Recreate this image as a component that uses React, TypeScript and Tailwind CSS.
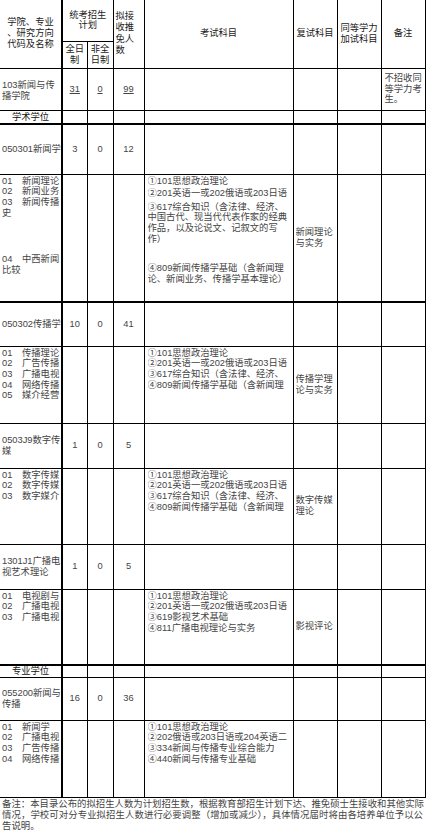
import React from "react";

type P = { children?: React.ReactNode; className?: string };

const bd = "border border-black p-0";

function Line({ children, className = "" }: P) {
  return <div className={`whitespace-nowrap overflow-hidden ${className}`}>{children}</div>;
}

function Item({ code, name, className = "" }: { code: string; name: string; className?: string }) {
  return (
    <div className={`flex whitespace-nowrap ${className}`}>
      <span className="w-[20px] shrink-0">{code}</span>
      <span>{name}</span>
    </div>
  );
}

function Subjects({ lines }: { lines: string[] }) {
  return (
    <div className="w-[143px] overflow-hidden">
      {lines.map((l, i) => (
        <Line key={i}>{l}</Line>
      ))}
    </div>
  );
}

const common4 = [
  "①101思想政治理论",
  "②201英语一或202俄语或203日语",
  "③617综合知识（含法律、经济、",
  "④809新闻传播学基础（含新闻理",
];

function CodeRow({ l1, l2, a, b, c, thick = false, h }: { l1: string; l2?: string; a: string; b: string; c: string; thick?: boolean; h: string }) {
  const bb = thick ? "border-b-2" : "";
  return (
    <tr className={h}>
      <td className={`${bd} ${bb} border-l-0 border-r-2 pl-[2px] align-middle`}>
        <Line>{l1}</Line>
        {l2 && <Line>{l2}</Line>}
      </td>
      <td className={`${bd} ${bb} text-center align-middle`}>{a}</td>
      <td className={`${bd} ${bb} text-center align-middle`}>{b}</td>
      <td className={`${bd} ${bb} text-center align-middle`}>{c}</td>
      <td className={`${bd} ${bb}`}></td>
      <td className={`${bd} ${bb}`}></td>
      <td className={`${bd} ${bb}`}></td>
      <td className={`${bd} ${bb}`}></td>
    </tr>
  );
}

function DetailRow({ h, left, mid, retest, thick = false }: { h: string; left: React.ReactNode; mid: React.ReactNode; retest?: React.ReactNode; thick?: boolean }) {
  const bb = thick ? "border-b-2" : "";
  return (
    <tr className={h}>
      <td className={`${bd} ${bb} border-l-0 border-r-2 pl-[2px] pt-[1px] align-top`}>{left}</td>
      <td className={`${bd} ${bb}`}></td>
      <td className={`${bd} ${bb}`}></td>
      <td className={`${bd} ${bb}`}></td>
      <td className={`${bd} ${bb} pl-[3px] pt-[1px] align-top`}>{mid}</td>
      <td className={`${bd} ${bb} pl-[2px] align-middle`}>{retest}</td>
      <td className={`${bd} ${bb}`}></td>
      <td className={`${bd} ${bb}`}></td>
    </tr>
  );
}

function DegreeRow({ label, thick = false }: { label: string; thick?: boolean }) {
  const bb = thick ? "border-b-2" : "";
  return (
    <tr className={label === "学术学位" ? "h-[14px]" : "h-[12px]"}>
      <td className={`${bd} ${bb} border-l-0 border-r-2 text-center align-middle text-[#111]`}>
        <div className="leading-[10px]">{label}</div>
      </td>
      <td className={`${bd} ${bb}`}></td>
      <td className={`${bd} ${bb}`}></td>
      <td className={`${bd} ${bb}`}></td>
      <td className={`${bd} ${bb}`}></td>
      <td className={`${bd} ${bb}`}></td>
      <td className={`${bd} ${bb}`}></td>
      <td className={`${bd} ${bb}`}></td>
    </tr>
  );
}

export default function App() {
  return (
    <div className="w-[427px] min-h-[831px] bg-white font-['Liberation_Sans','Noto_Sans_CJK_SC',sans-serif] text-[#444]">
      <table className="table-fixed border-collapse w-[425px] text-[9.3px] leading-[10.7px]">
        <colgroup>
          <col className="w-[62px]" />
          <col className="w-[25px]" />
          <col className="w-[26px]" />
          <col className="w-[31px]" />
          <col className="w-[149px]" />
          <col className="w-[44px]" />
          <col className="w-[44px]" />
          <col className="w-[44px]" />
        </colgroup>
        <tbody>
          <tr className="h-[41px] text-[#1a1a1a]">
            <td rowSpan={2} className={`${bd} border-l-0 border-t-0 border-r-2 text-center align-middle leading-[11px]`}>
              学院、专业
              <br />
              、研究方向
              <br />
              代码及名称
            </td>
            <td colSpan={2} className={`${bd} border-t-0 text-center align-middle leading-[10px]`}>
              统考招生
              <br />
              计划
            </td>
            <td rowSpan={2} className={`${bd} border-t-0 pl-[2px] align-middle leading-[11.5px]`}>
              拟接
              <br />
              收推
              <br />
              免人
              <br />
              数
            </td>
            <td rowSpan={2} className={`${bd} border-t-0 text-center align-middle`}>考试科目</td>
            <td rowSpan={2} className={`${bd} border-t-0 text-center align-middle`}>复试科目</td>
            <td rowSpan={2} className={`${bd} border-t-0 text-center align-middle`}>
              同等学力
              <br />
              加试科目
            </td>
            <td rowSpan={2} className={`${bd} border-t-0 text-center align-middle`}>备注</td>
          </tr>
          <tr className="h-[27px] text-[#1a1a1a]">
            <td className={`${bd} text-center align-middle leading-[11px]`}>
              全日
              <br />
              制
            </td>
            <td className={`${bd} text-center align-middle leading-[11px]`}>
              非全
              <br />
              日制
            </td>
          </tr>
          <tr className="h-[42px]">
            <td className={`${bd} border-l-0 border-r-2 pl-[2px] pt-[3px] align-middle`}>
              <Line>103新闻与传</Line>
              <Line>播学院</Line>
            </td>
            <td className={`${bd} text-center align-middle`}><span className="underline">31</span></td>
            <td className={`${bd} text-center align-middle`}><span className="underline">0</span></td>
            <td className={`${bd} text-center align-middle`}><span className="underline">99</span></td>
            <td className={bd}></td>
            <td className={bd}></td>
            <td className={bd}></td>
            <td className={`${bd} pl-[3px] align-middle leading-[10.5px]`}>
              不招收同
              <br />
              等学力考
              <br />
              生。
            </td>
          </tr>
          <DegreeRow label="学术学位" thick />
          <CodeRow h="h-[50px]" l1="050301新闻学" a="3" b="0" c="12" />
          <DetailRow
            h="h-[128px]"
            thick
            left={
              <div>
                <Item code="01" name="新闻理论" />
                <Item code="02" name="新闻业务" />
                <Item code="03" name="新闻传播" />
                <Line>史</Line>
                <Item code="04" name="中西新闻" className="mt-[36px]" />
                <Line>比较</Line>
              </div>
            }
            mid={
              <div className="w-[143px]">
                <Line>①101思想政治理论</Line>
                <Line className="mt-[2px]">②201英语一或202俄语或203日语</Line>
                <Line className="mt-[2.6px]">③617综合知识（含法律、经济、</Line>
                <Line>中国古代、现当代代表作家的经典</Line>
                <Line>作品，以及论说文、记叙文的写</Line>
                <Line>作）</Line>
                <Line className="mt-[19px]">④809新闻传播学基础（含新闻理</Line>
                <Line>论、新闻业务、传播学基本理论）</Line>
              </div>
            }
            retest={
              <>
                <Line>新闻理论</Line>
                <Line>与实务</Line>
              </>
            }
          />
          <CodeRow h="h-[44px]" l1="050302传播学" a="10" b="0" c="41" />
          <DetailRow
            h="h-[77px]"
            left={
              <div>
                <Item code="01" name="传播理论" />
                <Item code="02" name="广告传播" />
                <Item code="03" name="广播电视" />
                <Item code="04" name="网络传播" />
                <Item code="05" name="媒介经营" />
              </div>
            }
            mid={<Subjects lines={common4} />}
            retest={
              <>
                <Line>传播学理</Line>
                <Line>论与实务</Line>
              </>
            }
          />
          <CodeRow h="h-[45px]" l1="0503J9数字传" l2="媒" a="1" b="0" c="5" />
          <DetailRow
            h="h-[76px]"
            left={
              <div>
                <Item code="01" name="数字传媒" />
                <Item code="02" name="数字传媒" />
                <Item code="03" name="数字媒介" />
              </div>
            }
            mid={<Subjects lines={common4} />}
            retest={
              <>
                <Line>数字传媒</Line>
                <Line>理论</Line>
              </>
            }
          />
          <CodeRow h="h-[45px]" l1="1301J1广播电" l2="视艺术理论" a="1" b="0" c="5" />
          <DetailRow
            h="h-[76px]"
            thick
            left={
              <div>
                <Item code="01" name="电视剧与" />
                <Item code="02" name="广播电视" />
                <Item code="03" name="广播电视" />
              </div>
            }
            mid={
              <Subjects
                lines={[
                  "①101思想政治理论",
                  "②201英语一或202俄语或203日语",
                  "③619影视艺术基础",
                  "④811广播电视理论与实务",
                ]}
              />
            }
            retest={<Line>影视评论</Line>}
          />
          <DegreeRow label="专业学位" />
          <CodeRow h="h-[43px]" l1="055200新闻与" l2="传播" a="16" b="0" c="36" />
          <DetailRow
            h="h-[77px]"
            left={
              <div>
                <Item code="01" name="新闻学" />
                <Item code="02" name="广播电视" />
                <Item code="03" name="广告传播" />
                <Item code="04" name="网络传播" />
              </div>
            }
            mid={
              <Subjects
                lines={[
                  "①101思想政治理论",
                  "②202俄语或203日语或204英语二",
                  "③334新闻与传播专业综合能力",
                  "④440新闻与传播专业基础",
                ]}
              />
            }
          />
        </tbody>
      </table>
      <div className="w-[425px] px-[2px] text-[9.4px] leading-[11.3px] text-[#444]">
        <div className="whitespace-nowrap [text-align-last:justify] text-justify">
          备注：本目录公布的拟招生人数为计划招生数，根据教育部招生计划下达、推免硕士生接收和其他实际
        </div>
        <div className="whitespace-nowrap [text-align-last:justify] text-justify">
          情况，学校可对分专业拟招生人数进行必要调整（增加或减少），具体情况届时将由各培养单位予以公
        </div>
        <div className="whitespace-nowrap">告说明。</div>
      </div>
    </div>
  );
}
